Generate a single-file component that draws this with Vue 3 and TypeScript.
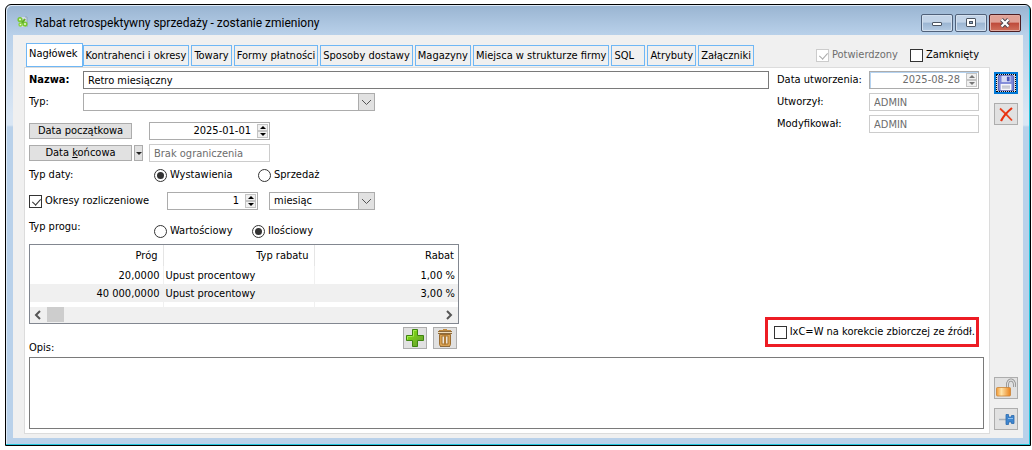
<script setup lang="ts">
import { ref } from 'vue'

interface Threshold {
  amount: string
  kind: string
  discount: string
}

const tabs: string[] = [
  'Nagłówek',
  'Kontrahenci i okresy',
  'Towary',
  'Formy płatności',
  'Sposoby dostawy',
  'Magazyny',
  'Miejsca w strukturze firmy',
  'SQL',
  'Atrybuty',
  'Załączniki',
]
const activeTab = ref('Nagłówek')

const name = ref('Retro miesiączny')
const discountType = ref('')
const startDate = ref('2025-01-01')
const endDate = ref('Brak ograniczenia')
const dateKind = ref('wystawienia')
const settlement = ref(true)
const periodCount = ref(1)
const periodUnit = ref('miesiąc')
const thresholdKind = ref('ilosciowy')
const confirmed = ref(true)
const closed = ref(false)
const correction = ref(false)
const description = ref('')

const thresholds = ref<Threshold[]>([
  { amount: '20,0000', kind: 'Upust procentowy', discount: '1,00 %' },
  { amount: '40 000,0000', kind: 'Upust procentowy', discount: '3,00 %' },
])

function shiftDate(days: number): void {
  const date = new Date(startDate.value + 'T00:00:00Z')
  date.setUTCDate(date.getUTCDate() + days)
  startDate.value = date.toISOString().slice(0, 10)
}
</script>

<template>
  <div class="window">
    <header class="titlebar">
      <svg class="app-icon" viewBox="0 0 12 12" aria-hidden="true">
        <path d="M4 1h6v10H4z" fill="#d5dce6" />
        <path d="M8 1h2v10" fill="none" stroke="#8ea4bd" />
        <path d="M2 2 9 10" stroke="#78c832" stroke-width="2" />
        <circle cx="3" cy="3.5" r="1.8" fill="#e9f7d7" stroke="#78c832" stroke-width="1.6" />
        <circle cx="3.5" cy="8.5" r="1.5" fill="#e9f7d7" stroke="#8bd43f" stroke-width="1.4" />
        <circle cx="8" cy="8" r="1.8" fill="#e9f7d7" stroke="#78c832" stroke-width="1.6" />
        <path d="M5 7 8 3" stroke="#62ad28" stroke-width="2" />
      </svg>
      <h1>Rabat retrospektywny sprzedaży - zostanie zmieniony</h1>
      <div class="window-buttons">
        <button type="button" aria-label="Minimalizuj">
          <svg viewBox="0 0 12 10"><rect x="1.5" y="4.5" width="9" height="3" rx="0.5" fill="#fff" stroke="#4b5563" /></svg>
        </button>
        <button type="button" aria-label="Maksymalizuj">
          <svg viewBox="0 0 12 10">
            <rect x="1.5" y="0.5" width="9" height="8" rx="0.5" fill="#fff" stroke="#4b5563" />
            <rect x="4.5" y="3.5" width="3" height="2" fill="#8fabc8" stroke="#4b5563" />
          </svg>
        </button>
        <button type="button" class="close" aria-label="Zamknij">
          <svg viewBox="0 0 12 10">
            <path d="M2.5 1.5 9.5 8.5M9.5 1.5 2.5 8.5" stroke="#4b4550" stroke-width="4" />
            <path d="M2.5 1.5 9.5 8.5M9.5 1.5 2.5 8.5" stroke="#fff" stroke-width="2.2" />
          </svg>
        </button>
      </div>
    </header>

    <div class="client">
      <div class="content">
        <div class="tab-row">
          <nav class="tabs" role="tablist">
            <button
              v-for="tab in tabs"
              :key="tab"
              type="button"
              role="tab"
              class="tab"
              :class="{ active: tab === activeTab }"
              :aria-selected="tab === activeTab"
              @click="activeTab = tab"
            >{{ tab }}</button>
          </nav>
          <div class="flags">
            <label class="option disabled"><input v-model="confirmed" type="checkbox" disabled />Potwierdzony</label>
            <label class="option"><input v-model="closed" type="checkbox" />Zamknięty</label>
          </div>
        </div>

        <main class="panel">
          <div class="columns">
            <section class="form">
              <div class="row gap-s">
                <label class="caption strong" for="name">Nazwa:</label>
                <input id="name" v-model="name" class="field dark grow" type="text" />
              </div>
              <div class="row gap-l">
                <label class="caption" for="type">Typ:</label>
                <span class="select wide">
                  <select id="type" v-model="discountType"><option value=""></option></select>
                  <svg viewBox="0 0 15 16"><path d="M3 6 7.5 10.5 12 6" /></svg>
                </span>
              </div>
              <div class="row gap-s">
                <span class="date-buttons"><button type="button" class="push">Data początkowa</button></span>
                <span class="spin date">
                  <input v-model="startDate" type="text" aria-label="Data początkowa" />
                  <span class="arrows">
                    <button type="button" aria-label="Następny dzień" @click="shiftDate(1)"></button>
                    <button type="button" class="down" aria-label="Poprzedni dzień" @click="shiftDate(-1)"></button>
                  </span>
                </span>
              </div>
              <div class="row gap-s">
                <span class="date-buttons">
                  <button type="button" class="push">Data <u>k</u>ońcowa</button>
                  <button type="button" class="push drop" aria-label="Opcje daty końcowej"></button>
                </span>
                <input v-model="endDate" class="field pale date" type="text" readonly aria-label="Data końcowa" />
              </div>
              <div class="row gap-m">
                <span class="group">Typ daty:</span>
                <label class="option first"><input v-model="dateKind" type="radio" name="dateKind" value="wystawienia" />Wystawienia</label>
                <label class="option"><input v-model="dateKind" type="radio" name="dateKind" value="sprzedaz" />Sprzedaż</label>
              </div>
              <div class="row gap-xl">
                <label class="option settlement"><input v-model="settlement" type="checkbox" />Okresy rozliczeniowe</label>
                <span class="spin count">
                  <input v-model.number="periodCount" type="text" aria-label="Liczba okresów" />
                  <span class="arrows">
                    <button type="button" aria-label="Zwiększ" @click="periodCount++"></button>
                    <button type="button" class="down" aria-label="Zmniejsz" @click="periodCount--"></button>
                  </span>
                </span>
                <span class="select unit">
                  <select v-model="periodUnit" aria-label="Jednostka okresu"><option>miesiąc</option></select>
                  <svg viewBox="0 0 15 16"><path d="M3 6 7.5 10.5 12 6" /></svg>
                </span>
              </div>
              <div class="row gap-s">
                <span class="group raised">Typ progu:</span>
                <label class="option first second-set"><input v-model="thresholdKind" type="radio" name="thresholdKind" value="wartosciowy" />Wartościowy</label>
                <label class="option"><input v-model="thresholdKind" type="radio" name="thresholdKind" value="ilosciowy" />Ilościowy</label>
              </div>

              <div class="grid">
                <table>
                  <thead>
                    <tr><th class="c1">Próg</th><th class="c2">Typ rabatu</th><th>Rabat</th></tr>
                  </thead>
                  <tbody>
                    <tr v-for="item in thresholds" :key="item.amount">
                      <td>{{ item.amount }}</td>
                      <td class="kind">{{ item.kind }}</td>
                      <td>{{ item.discount }}</td>
                    </tr>
                    <tr class="rest"><td></td><td></td><td></td></tr>
                  </tbody>
                </table>
                <div class="scrollbar">
                  <button type="button" aria-label="Przewiń w lewo"><svg viewBox="0 0 16 16"><path d="M10 4 6 8 10 12" /></svg></button>
                  <span class="thumb"></span>
                  <button type="button" class="end" aria-label="Przewiń w prawo"><svg viewBox="0 0 16 16"><path d="M6 4 10 8 6 12" /></svg></button>
                </div>
              </div>

              <div class="under">
                <label class="notes-label" for="notes">Opis:</label>
                <button type="button" class="tool" aria-label="Dodaj">
                  <svg viewBox="0 0 20 20">
                    <defs>
                      <linearGradient id="plus" x1="0" y1="0" x2="1" y2="1">
                        <stop offset="0.2" stop-color="#7fd813" /><stop offset="0.8" stop-color="#6aa92c" />
                      </linearGradient>
                    </defs>
                    <path d="M7.5 1.5h5v6h6v5h-6v6h-5v-6h-6v-5h6z" fill="url(#plus)" stroke="#3f8410" />
                    <path d="M8.5 8.5v-6h3M2.5 11.5v-3h5" fill="none" stroke="#a4ea55" />
                  </svg>
                </button>
                <button type="button" class="tool" aria-label="Usuń">
                  <svg viewBox="0 0 20 20">
                    <path d="M8 1h4v1h4v2H4V2h4z" fill="#c08a3e" />
                    <path d="M3 3.5h14" stroke="#8c6a3c" />
                    <path d="M3 4.5h14" stroke="#f0ddbb" />
                    <path d="M3 5.5h14" stroke="#8c6a3c" />
                    <path d="M4.5 6.5h11v10l-1 2h-9l-1-2z" fill="#d9a253" stroke="#9b6c2f" />
                    <path d="M7 8h6v8H7z" fill="#ede5d8" stroke="#a8742f" />
                    <path d="M10 7.5v9" stroke="#b07b35" stroke-width="2" />
                    <path d="M5 18.5h10" stroke="#8c6a3c" />
                  </svg>
                </button>
              </div>
            </section>

            <aside class="meta">
              <div class="row gap-s">
                <label for="created">Data utworzenia:</label>
                <span class="spin off">
                  <input id="created" type="text" value="2025-08-28" disabled />
                  <span class="arrows">
                    <button type="button" disabled aria-label="Następny dzień"></button>
                    <button type="button" class="down" disabled aria-label="Poprzedni dzień"></button>
                  </span>
                </span>
              </div>
              <div class="row gap-s">
                <label for="author">Utworzył:</label>
                <input id="author" class="field pale" type="text" value="ADMIN" disabled />
              </div>
              <div class="row gap-s">
                <label for="editor">Modyfikował:</label>
                <input id="editor" class="field pale" type="text" value="ADMIN" disabled />
              </div>
              <label class="option marked"><input v-model="correction" type="checkbox" />IxC=W na korekcie zbiorczej ze źródł.</label>
            </aside>
          </div>
          <textarea id="notes" v-model="description"></textarea>
        </main>
      </div>

      <div class="side">
        <button type="button" class="tool save" aria-label="Zapisz">
          <svg viewBox="0 0 20 20">
            <path d="M1.5 1.5h16l1 1v16h-17z" fill="#7b86d8" stroke="#4c55b0" />
            <path d="M5 2h10v7H5z" fill="#d6daf3" />
            <path d="M11 3h3v5h-3z" fill="#4a55b5" />
            <path d="M4 11h12v7H4z" fill="#f7f7fb" />
            <path d="M5.5 13.5h9M5.5 15.5h9" stroke="#9fa5b5" />
          </svg>
        </button>
        <button type="button" class="tool" aria-label="Anuluj">
          <svg viewBox="0 0 20 20">
            <path d="M4 4.500C8 8 12 12 16 16.500" fill="none" stroke="#e8421f" stroke-width="1.800" />
            <path d="M16 4C11 8 7.500 12 5 17" fill="none" stroke="#e8300f" stroke-width="2.200" />
          </svg>
        </button>
        <button type="button" class="tool lower" aria-label="Odblokuj">
          <svg viewBox="0 0 20 20">
            <defs>
              <linearGradient id="lock">
                <stop offset="0" stop-color="#f19a36" /><stop offset="0.35" stop-color="#ffe3a8" /><stop offset="1" stop-color="#e9821b" />
              </linearGradient>
            </defs>
            <path d="M11.5 10V6.500a3.500 4.500 0 0 1 7 0V9" fill="none" stroke="#8d8d8d" stroke-width="3" />
            <path d="M11.5 10V6.500a3.500 4.500 0 0 1 7 0V9" fill="none" stroke="#dedede" stroke-width="1.400" />
            <rect x="0.5" y="9.5" width="14" height="8.5" rx="1" fill="url(#lock)" stroke="#c98438" stroke-width="0.8" />
          </svg>
        </button>
        <button type="button" class="tool" aria-label="Przypnij">
          <svg viewBox="0 0 20 20">
            <path d="M3 10.5h8" stroke="#a8b0b8" stroke-width="1.5" />
            <path d="M10 5.5h2.500v2.500h3V6.500H18v8h-2.500V13h-3v2.500H10z" fill="#3f86cf" stroke="#2b69ad" stroke-width="0.8" />
            <path d="M12 9.5h5" stroke="#8fc0ee" />
          </svg>
        </button>
      </div>
    </div>
  </div>
</template>

<style>
body {
  margin: 0;
  background: #fff;
}
</style>

<style scoped>
* {
  box-sizing: border-box;
}

.window {
  margin: 4px 1px 4px 5px;
  padding: 1px 7px 7px;
  border: 1px solid #000;
  border-radius: 6px 6px 0 0;
  box-shadow: inset -1px -1px 0 #22c5dc, inset 1px 1px 0 #dfeaf6;
  background: linear-gradient(#99b4d1 0, #b9d1ea 30px, #d9e6f4 110px, #d9e6f4 120px, #b9d1ea 122px);
  color: #000;
  font: 11px/14px "DejaVu Sans Condensed", "DejaVu Sans", sans-serif;
}

button,
input,
select,
textarea {
  margin: 0;
  padding: 0;
  border-radius: 0;
  color: inherit;
  font: inherit;
}

svg {
  display: block;
}

.titlebar {
  display: flex;
  align-items: center;
  height: 29px;
  padding: 0 2px 0 4px;
}

.app-icon {
  width: 12px;
  height: 12px;
  margin-top: 2px;
}

h1 {
  flex: 1;
  margin: 0 0 0 6px;
  padding-top: 4px;
  font: 12px/16px Roboto, "Noto Sans", sans-serif;
  white-space: nowrap;
}

.window-buttons {
  display: flex;
  gap: 2px;
  padding-top: 4px;
}

.window-buttons button {
  display: flex;
  align-items: center;
  justify-content: center;
  width: 32px;
  height: 18px;
  border: 1px solid #50617a;
  border-radius: 2px;
  background: linear-gradient(#c3d4e8 0 45%, #9bb5d2 50%, #b5cbe3);
  box-shadow: inset 0 0 0 1px #d3e0ef;
}

.window-buttons .close {
  border-color: #4d1d22;
  background: linear-gradient(#e0a196 0 45%, #be4a3a 50%, #d0705c);
  box-shadow: inset 0 0 0 1px #e2aaa0;
}

.window-buttons svg {
  width: 12px;
  height: 10px;
}

.client {
  display: flex;
  gap: 4px;
  padding: 8px 5px 4px 11px;
  background: #f0f0f0;
}

.content {
  flex: 1;
  min-width: 0;
}

.tab-row {
  display: flex;
  justify-content: space-between;
  height: 24px;
}

.tabs {
  display: flex;
  gap: 2px;
  align-items: center;
  padding-left: 2px;
}

.tab {
  height: 21px;
  min-width: 34px;
  padding: 2px 2px 0;
  border: 1px solid #6fb7f5;
  background: #f0f0f0;
  text-align: left;
  white-space: nowrap;
}

.tab.active {
  height: 24px;
  margin-right: -2px;
  padding: 0 4px 3px 2px;
  background: #fff;
}

.flags {
  display: flex;
  gap: 12px;
  padding-right: 11px;
  align-items: center;
}

.option {
  display: flex;
  align-items: center;
  gap: 3px;
  white-space: nowrap;
}

.option.disabled {
  color: #6d6d6d;
}

.option input {
  position: relative;
  flex: none;
  width: 13px;
  height: 13px;
  border: 1px solid #333;
  background: #fff;
  appearance: none;
}

.option input[type="radio"] {
  border-radius: 50%;
}

.option input[type="checkbox"]:checked::after {
  position: absolute;
  top: 1px;
  left: 4px;
  width: 4px;
  height: 7px;
  border: solid #333;
  border-width: 0 1px 1px 0;
  content: "";
  transform: rotate(42deg);
}

.option input[type="radio"]:checked::after {
  position: absolute;
  inset: 2px;
  border-radius: 50%;
  background: #333;
  content: "";
}

.option input:disabled {
  border-color: #ccc;
}

.option input[type="checkbox"]:disabled:checked::after {
  border-color: #aaa;
}

.panel {
  padding: 3px 5px 4px 4px;
  border: 1px solid #dcdcdc;
  background: #fff;
}

.columns {
  display: flex;
  gap: 8px;
  padding-right: 5px;
}

.form {
  flex: 1;
  min-width: 0;
}

.row {
  display: flex;
  align-items: center;
  height: 18px;
}

.gap-s {
  margin-bottom: 4px;
}

.gap-m {
  margin-bottom: 8px;
}

.gap-l {
  margin-bottom: 11px;
}

.gap-xl {
  margin-bottom: 12px;
}

.caption {
  width: 54px;
}

.strong {
  font-weight: bold;
}

.field {
  height: 18px;
  padding: 0 4px;
  border: 1px solid #acacac;
  background: #fff;
}

.field.dark {
  border-color: #7a7a7a;
}

.field.pale {
  border-color: #ccc;
  color: #6d6d6d;
}

.grow {
  flex: 1;
}

.date {
  width: 121px;
}

.select {
  position: relative;
  height: 18px;
}

.select select {
  display: block;
  width: 100%;
  height: 100%;
  padding: 0 18px 0 4px;
  border: 1px solid #acacac;
  background: #fff;
  appearance: none;
}

.select svg {
  position: absolute;
  top: 0;
  right: 0;
  width: 17px;
  height: 18px;
  border: 1px solid #acacac;
  background: #e1e1e1;
  pointer-events: none;
}

.select path,
.scrollbar path {
  fill: none;
  stroke: #555;
}

.scrollbar path {
  stroke-width: 2;
}

.wide {
  width: 292px;
}

.unit {
  width: 106px;
  margin-left: 11px;
}

.date-buttons {
  display: flex;
  gap: 2px;
  width: 120px;
}

.push {
  width: 103px;
  height: 16px;
  border: 1px solid #acacac;
  background: #e1e1e1;
  line-height: 14px;
  white-space: nowrap;
}

.drop {
  display: flex;
  align-items: center;
  justify-content: center;
  width: 9px;
}

.drop::after {
  border: 3px solid transparent;
  border-top: 3px solid #222;
  border-bottom: 0;
  content: "";
}

.spin {
  display: flex;
  height: 18px;
  padding: 1px;
  border: 1px solid #acacac;
  background: #fff;
}

.spin input {
  flex: 1;
  min-width: 0;
  padding-right: 6px;
  border: 0;
  background: #fff;
  text-align: right;
}

.arrows {
  display: flex;
  flex-direction: column;
  width: 11px;
}

.arrows button {
  display: flex;
  flex: 1;
  align-items: center;
  justify-content: center;
  border: 1px solid #c4c4c4;
  background: #f0f0f0;
}

.arrows button::after {
  border: 3px solid transparent;
  border-top: 0;
  border-bottom: 3px solid #000;
  content: "";
}

.arrows .down::after {
  border-top: 3px solid #000;
  border-bottom: 0;
}

.spin.off {
  box-shadow: inset 1px 1px 0 #b5d3f1;
  color: #6d6d6d;
}

.spin.off button::after {
  border-top-color: #777;
  border-bottom-color: #777;
}

.count {
  width: 91px;
}

.group {
  width: 125px;
}

.raised {
  padding-bottom: 8px;
}

.first {
  width: 104px;
}

.second-set {
  width: 98px;
}

.settlement {
  width: 138px;
}

.grid {
  width: 430px;
  margin-bottom: 3px;
  border: 1px solid #828790;
}

table {
  width: 100%;
  border-collapse: collapse;
  table-layout: fixed;
}

th,
td {
  height: 18px;
  padding: 2px 3px 0;
  font-weight: normal;
  text-align: right;
}

th {
  height: 21px;
  padding: 0 5px;
  border-right: 1px solid #e5e5e5;
}

th:last-child {
  padding-right: 4px;
  border-right: 0;
}

.c1 {
  width: 133px;
}

.c2 {
  width: 151px;
}

td {
  border-right: 1px solid #f0f0f0;
}

td:last-child {
  border-right: 0;
}

.kind {
  padding-left: 2px;
  text-align: left;
}

tbody tr:nth-child(2) {
  background: #f0f0f0;
}

.rest td {
  height: 5px;
  padding: 0;
}

.scrollbar {
  display: flex;
  height: 16px;
  background: #f0f0f0;
}

.scrollbar button {
  width: 17px;
  border: 0;
  background: none;
}

.scrollbar svg {
  width: 16px;
  height: 16px;
}

.scrollbar .end {
  margin-left: auto;
}

.thumb {
  width: 17px;
  height: 15px;
  background: #cdcdcd;
}

.under {
  display: flex;
  gap: 6px;
  align-items: flex-start;
  width: 428px;
  height: 28px;
  margin-bottom: 2px;
}

.notes-label {
  align-self: flex-end;
  margin-right: auto;
}

.tool {
  display: flex;
  align-items: center;
  justify-content: center;
  width: 24px;
  height: 22px;
  border: 1px solid #adadad;
  background: #e1e1e1;
}

.tool svg {
  width: 20px;
  height: 20px;
}

.save {
  outline: 1px dotted #000;
  outline-offset: -3px;
  border: 2px solid #0078d7;
}

.save svg {
  width: 18px;
  height: 18px;
}

.meta {
  display: flex;
  flex-direction: column;
  align-items: flex-end;
  width: 202px;
}

.meta .row {
  width: 100%;
}

.meta .row label {
  width: 92px;
}

.meta .field,
.meta .spin {
  flex: 1;
  min-width: 0;
}

.marked {
  margin-top: auto;
  margin-bottom: 10px;
  padding: 5px 1px 5px 6px;
  border: 3px solid #ed1c24;
}

textarea {
  display: block;
  width: 100%;
  height: 72px;
  border: 1px solid #7a7a7a;
  resize: none;
}

.side {
  display: flex;
  flex-direction: column;
  gap: 9px;
  padding: 29px 0 4px;
}

.lower {
  margin-top: auto;
}
</style>
